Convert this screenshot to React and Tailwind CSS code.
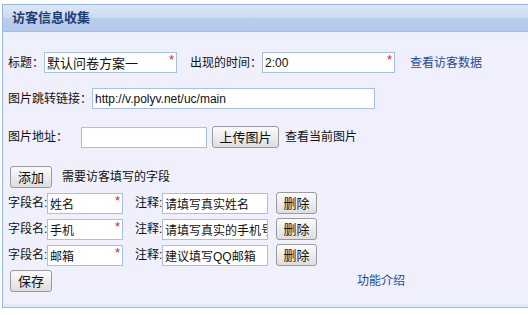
import React from "react";

const font = { fontFamily: '"Liberation Sans", Arial, "Noto Sans CJK SC", sans-serif' };

function Btn({ w, children }) {
  return (
    <button
      className={`${w} h-[22px] shrink-0 flex items-center justify-center rounded-[3px] border border-[#9a9a9a] bg-gradient-to-b from-[#fbfbfb] to-[#dedede] text-[13px] leading-none text-[#111]`}
    >
      {children}
    </button>
  );
}

function Field({ w, value, star, size = "text-[12px]" }) {
  return (
    <div className={`relative ${w} h-[21px] shrink-0`}>
      <input
        defaultValue={value}
        className={`w-full h-full border border-[#a5c1e3] bg-white pl-[2px] pr-0 ${size} text-[#111] outline-none`}
      />
      {star && (
        <span className="absolute right-[3px] top-[1px] text-[13px] leading-none text-[#e31b1b]">*</span>
      )}
    </div>
  );
}

export default function App() {
  const rows = [
    { name: "姓名", note: "请填写真实姓名" },
    { name: "手机", note: "请填写真实的手机号" },
    { name: "邮箱", note: "建议填写QQ邮箱" },
  ];

  return (
    <div className="w-[528px] h-[315px] bg-white pt-[4px] pl-[2px] overflow-hidden whitespace-nowrap" style={font}>
      <div className="border-l border-t border-b border-[#97b8e4]">
        {/* 标题栏 */}
        <div className="h-[27px] flex items-center pl-[9px] border-b border-[#9dbbe5] bg-[linear-gradient(to_bottom,#dce6f5_0%,#cddbf0_48%,#b9ceef_50%,#b3c9ec_100%)]">
          <span className="text-[13px] font-bold text-[#1e3d73]">访客信息收集</span>
        </div>

        {/* 内容 */}
        <div className="bg-[#eff0fc] pl-[5px] pt-[20px] pb-[12px] text-[12px] text-[#111]">
          <div className="flex items-center h-[21px]">
            <span className="w-[36px] shrink-0">标题：</span>
            <Field w="w-[133px]" value="默认问卷方案一" star size="text-[13px]" />
            <span className="ml-[13px] w-[72px] shrink-0">出现的时间：</span>
            <Field w="w-[133px]" value="2:00" star />
            <a className="ml-[15px] text-[#1b4a9c]">查看访客数据</a>
          </div>

          <div className="flex items-center h-[21px] mt-[15px]">
            <span className="w-[84px] shrink-0">图片跳转链接：</span>
            <Field w="w-[283px]" value="http://v.polyv.net/uc/main" />
          </div>

          <div className="flex items-center h-[22px] mt-[17px]">
            <span className="w-[73px] shrink-0">图片地址：</span>
            <Field w="w-[126px]" value="" />
            <div className="ml-[5px]">
              <Btn w="w-[67px]">上传图片</Btn>
            </div>
            <span className="ml-[6px]">查看当前图片</span>
          </div>

          <div className="flex items-center h-[22px] mt-[18px]">
            <div className="ml-[2px]">
              <Btn w="w-[42px]">添加</Btn>
            </div>
            <span className="ml-[10px]">需要访客填写的字段</span>
          </div>

          {rows.map((r) => (
            <div key={r.name} className="flex items-center h-[22px] mt-[4px]">
              <span className="w-[39px] shrink-0">字段名:</span>
              <Field w="w-[76px]" value={r.name} star />
              <span className="ml-[12px] w-[27px] shrink-0">注释:</span>
              <Field w="w-[106px]" value={r.note} />
              <div className="ml-[8px]">
                <Btn w="w-[41px]">删除</Btn>
              </div>
            </div>
          ))}

          <div className="flex items-center h-[22px] mt-[4px]">
            <div className="ml-[2px]">
              <Btn w="w-[42px]">保存</Btn>
            </div>
            <a className="ml-[305px] text-[#1b4a9c]">功能介绍</a>
          </div>
        </div>
        <div className="h-[3px] bg-[#e3e9f6]" />
      </div>
    </div>
  );
}
